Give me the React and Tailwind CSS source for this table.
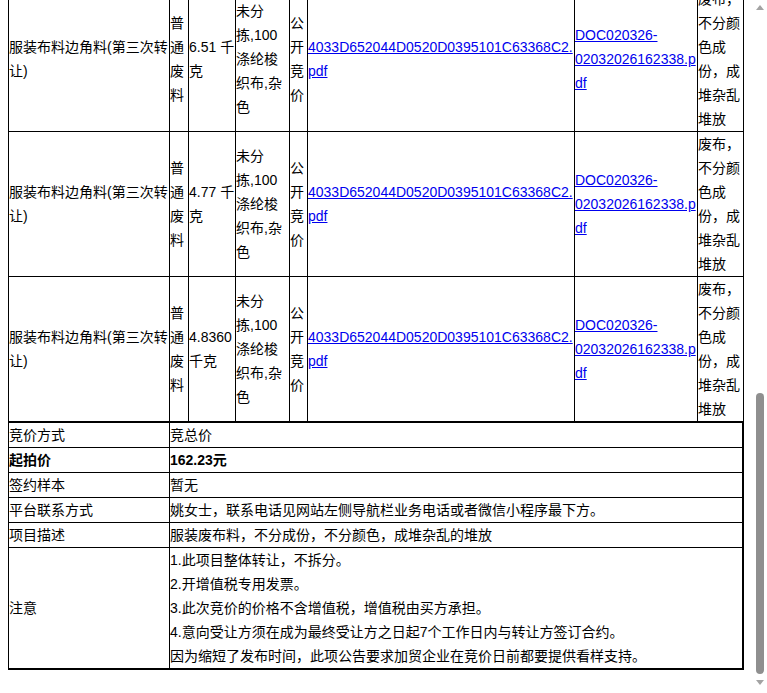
import React from "react";

const weights = ["6.51 千克", "4.77 千克", "4.8360千克"];

function ItemRow({ weight }) {
  const td = "border-r border-b border-black p-0 align-middle text-left";
  return (
    <tr>
      <td className={`${td} w-[161px]`}>服装布料边角料(第三次转让)</td>
      <td className={`${td} w-[19px]`}>普通废料</td>
      <td className={`${td} w-[47px]`}>{weight}</td>
      <td className={`${td} w-[54px]`}>未分拣,100涤纶梭织布,杂色</td>
      <td className={`${td} w-[18px]`}>公开竞价</td>
      <td className={`${td} w-[267px] [overflow-wrap:anywhere]`}>
        <a href="#" className="text-[#0000ee] underline">
          4033D652044D0520D0395101C63368C2.pdf
        </a>
      </td>
      <td className={`${td} w-[123px] [overflow-wrap:anywhere]`}>
        <a href="#" className="text-[#0000ee] underline">
          DOC020326-02032026162338.pdf
        </a>
      </td>
      <td className={td}>废布，不分颜色成份，成堆杂乱堆放</td>
    </tr>
  );
}

function KV({ k, children, bold }) {
  return (
    <tr className={bold ? "font-bold" : ""}>
      <td className="w-[161px] border-r border-b border-black p-0 align-middle text-left">{k}</td>
      <td className="border-r border-b border-black p-0 align-middle text-left">{children}</td>
    </tr>
  );
}

function Scrollbar() {
  return (
    <div className="flex h-full w-[15px] shrink-0 flex-col items-center bg-white">
      <div className="flex h-[15px] w-full items-center justify-center">
        <svg width="8" height="5" viewBox="0 0 8 5">
          <polygon points="4,0 8,5 0,5" fill="#a3a3a3" />
        </svg>
      </div>
      <div className="flex-1" />
      <div className="h-[281px] w-[8px] rounded-full bg-[#8f8f8f]" />
      <div className="flex h-[19px] w-full items-center justify-center pb-[2px]">
        <svg width="8" height="5" viewBox="0 0 8 5">
          <polygon points="0,0 8,0 4,5" fill="#a3a3a3" />
        </svg>
      </div>
    </div>
  );
}

export default function App() {
  return (
    <div className="flex h-[693px] w-[767px] overflow-hidden bg-white font-['Liberation_Sans','Noto_Sans_CJK_SC',sans-serif] text-[14px] leading-[24px] text-black">
      <div className="flex h-full w-[752px] shrink-0 flex-col justify-end overflow-hidden">
        <div className="px-2 pb-[23px]">
          <table className="w-full table-fixed border-separate border-spacing-0 border-l border-t border-black">
            <tbody>
              {weights.map((w, i) => (
                <ItemRow key={i} weight={w} />
              ))}
            </tbody>
          </table>
          <table className="w-full table-fixed border-separate border-spacing-0 border border-black">
            <tbody>
              <KV k="竞价方式">竞总价</KV>
              <KV k="起拍价" bold>162.23元</KV>
              <KV k="签约样本">暂无</KV>
              <KV k="平台联系方式">姚女士，联系电话见网站左侧导航栏业务电话或者微信小程序最下方。</KV>
              <KV k="项目描述">服装废布料，不分成份，不分颜色，成堆杂乱的堆放</KV>
              <KV k="注意">
                <div>1.此项目整体转让，不拆分。</div>
                <div>2.开增值税专用发票。</div>
                <div>3.此次竞价的价格不含增值税，增值税由买方承担。</div>
                <div>4.意向受让方须在成为最终受让方之日起7个工作日内与转让方签订合约。</div>
                <div>因为缩短了发布时间，此项公告要求加贸企业在竞价日前都要提供看样支持。</div>
              </KV>
            </tbody>
          </table>
        </div>
      </div>
      <Scrollbar />
    </div>
  );
}
